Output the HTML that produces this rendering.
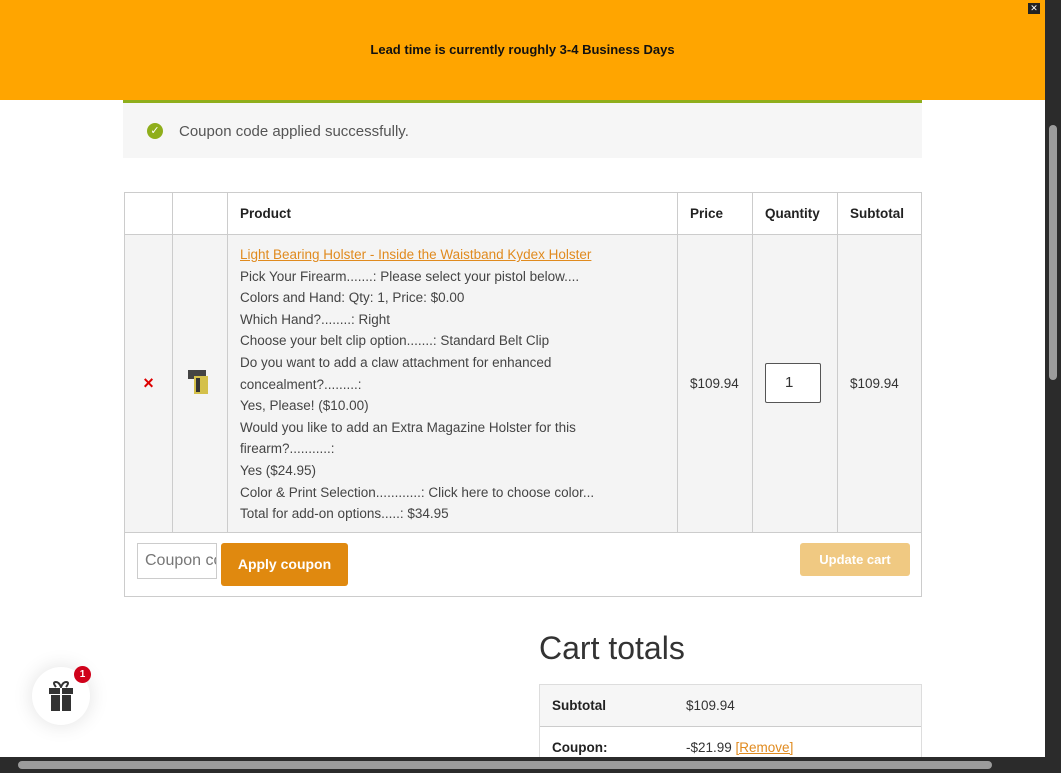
<!DOCTYPE html><html><head><style>
body{margin:0;width:1061px;height:773px;overflow:hidden;background:#fff;font-family:"Liberation Sans",sans-serif;font-size:14px;color:#333;position:relative}
.top{position:absolute;left:0;top:0;width:1045px;height:100px;background:#ffa500;text-align:center}
.top b{position:absolute;left:0;right:0;top:42px;font-size:13px;color:#111}
.x{position:absolute;left:1028px;top:3px;width:12px;height:11px;background:#222;color:#fff;font-size:9px;line-height:11px;text-align:center}
.msg{position:absolute;left:123px;top:100px;width:799px;height:58px;background:#f6f6f6;border-top:3px solid #8fae1b;box-sizing:border-box}
.msg span{position:absolute;left:56px;top:20px;font-size:15px;color:#555}
.ok{position:absolute;left:24px;top:20px;width:16px;height:16px;border-radius:50%;background:#8fae1b;color:#fff;font-size:11px;text-align:center;line-height:16px}
table{position:absolute;left:124px;top:192px;border-collapse:collapse;width:798px}
td,th{border:1px solid #ccc;padding:0 12px;text-align:left;font-size:13.5px}
th{height:41px;color:#222}
.body td{background:#f4f4f4}
.desc{line-height:21.6px;padding-top:9px;padding-bottom:7px;color:#444}
.desc a{color:#e08a1e}
.act{position:absolute;left:124px;top:533px;width:798px;height:64px;border:1px solid #ccc;border-top:none;box-sizing:border-box}
.inp{position:absolute;left:12px;top:10px;width:80px;height:36px;border:1px solid #ccc;box-sizing:border-box;color:#777;font-size:16px;line-height:34px;padding-left:7px;overflow:hidden;white-space:nowrap}
.btn{position:absolute;left:96px;top:10px;width:127px;height:43px;background:#e0890f;border-radius:3px;color:#fff;font-weight:bold;font-size:14px;text-align:center;line-height:43px}
.upd{position:absolute;left:675px;top:10px;width:110px;height:33px;background:#f0c982;border-radius:3px;color:#fff;font-weight:bold;font-size:13px;text-align:center;line-height:33px}
h2{position:absolute;left:539px;top:630px;margin:0;font-weight:normal;font-size:32px;color:#333}
.tot{position:absolute;left:539px;top:684px;width:383px;border:1px solid #ddd;box-sizing:border-box}
.r{height:41px;position:relative;font-size:13.5px}
.r b{position:absolute;left:12px;top:13px;color:#222}
.r span{position:absolute;left:146px;top:13px}
.vs{position:absolute;right:0;top:0;width:16px;height:773px;background:#2b2b2b}
.vs i{position:absolute;left:4px;top:125px;width:8px;height:255px;background:#9c9c9c;border-radius:4px}
.hs{position:absolute;left:0;top:757px;width:1061px;height:16px;background:#2b2b2b}
.hs i{position:absolute;left:18px;top:4px;width:974px;height:8px;background:#9c9c9c;border-radius:4px}
.gift{position:absolute;left:32px;top:667px;width:58px;height:58px;border-radius:50%;background:#fff;box-shadow:0 0 20px rgba(0,0,0,.12)}
.badge{position:absolute;left:74px;top:666px;width:17px;height:17px;border-radius:50%;background:#d0021b;color:#fff;font-size:10px;font-weight:bold;text-align:center;line-height:17px}
</style></head><body>
<div class="top"><b>Lead time is currently roughly 3-4 Business Days</b></div>
<div class="x">✕</div>
<div class="msg"><div class="ok">✓</div><span>Coupon code applied successfully.</span></div>
<table>
<tr><th style="width:23px"></th><th style="width:30px"></th><th>Product</th><th style="width:50px">Price</th><th style="width:60px">Quantity</th><th style="width:59px">Subtotal</th></tr>
<tr class="body"><td style="color:#d00;font-size:18px;font-weight:bold;text-align:center;padding:0">×</td>
<td style="padding:0;text-align:center"><svg width="30" height="32"><rect x="3" y="4" width="18" height="9" fill="#444"/><rect x="9" y="10" width="14" height="18" fill="#d4c04a"/><rect x="11" y="12" width="4" height="14" fill="#333"/></svg></td>
<td class="desc"><a href="#">Light Bearing Holster - Inside the Waistband Kydex Holster</a><br>Pick Your Firearm.......: Please select your pistol below....<br>Colors and Hand: Qty: 1, Price: $0.00<br>Which Hand?........: Right<br>Choose your belt clip option.......: Standard Belt Clip<br>Do you want to add a claw attachment for enhanced<br>concealment?.........:<br>Yes, Please! ($10.00)<br>Would you like to add an Extra Magazine Holster for this<br>firearm?...........:<br>Yes ($24.95)<br>Color &amp; Print Selection............: Click here to choose color...<br>Total for add-on options.....: $34.95</td>
<td>$109.94</td><td><div style="width:56px;height:40px;border:1px solid #555;border-radius:2px;background:#fff;box-sizing:border-box;line-height:38px;padding-left:19px;font-size:15px">1</div></td><td>$109.94</td></tr>
</table>
<div class="act"><div class="inp">Coupon code</div><div class="btn">Apply coupon</div><div class="upd">Update cart</div></div>
<h2>Cart totals</h2>
<div class="tot"><div class="r" style="background:#f6f6f6;border-bottom:1px solid #ccc"><b>Subtotal</b><span>$109.94</span></div><div class="r"><b>Coupon:</b><span>-$21.99 <u style="color:#e08a1e">[Remove]</u></span></div></div>
<div class="gift"><svg width="58" height="58"><path d="M24 20q-4-5 0-5q3 0 5 5q2-5 5-5q4 0 0 5" fill="none" stroke="#333" stroke-width="2"/><rect x="17" y="21" width="24" height="6" fill="#333"/><rect x="19" y="28" width="20" height="16" fill="#333"/><rect x="28" y="21" width="2" height="23" fill="#fff"/></svg></div>
<div class="badge">1</div>
<div class="vs"><i></i></div><div class="hs"><i></i></div>
</body></html>
